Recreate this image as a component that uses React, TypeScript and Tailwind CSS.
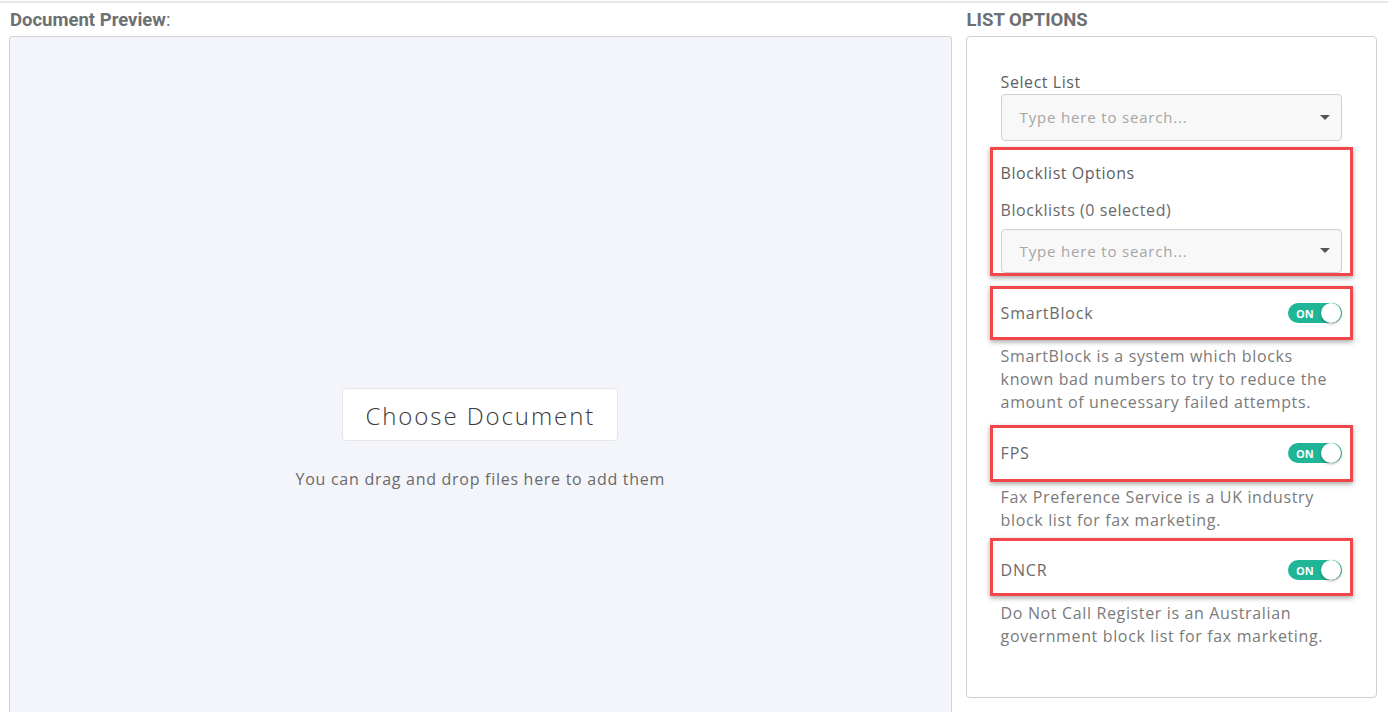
import React from "react";

const body = { fontFamily: '"Open Sans", "Noto Sans", sans-serif' };
const head = { fontFamily: 'Roboto, "Liberation Sans", sans-serif' };

function Caret() {
  return (
    <svg width="10" height="6" viewBox="0 0 10 6" className="shrink-0">
      <path d="M0 0 L10 0 L5 5 Z" fill="#555" />
    </svg>
  );
}

function SearchSelect({ h }: { h: string }) {
  return (
    <div className={`flex items-center justify-between rounded-[4px] border border-[#cfcfcf] bg-[#f8f8f8] pl-[18px] pr-[11px] ${h}`}>
      <span className="text-[15px] tracking-[0.055em] text-[#a5a5a5]">Type here to search...</span>
      <Caret />
    </div>
  );
}

function Toggle() {
  return (
    <div className="relative flex h-[20px] w-[54px] items-center rounded-full bg-[#1fb597] pl-[8px]">
      <span className="text-[11px] font-bold leading-none text-white">ON</span>
      <div className="absolute right-[1px] top-[0px] h-[20px] w-[20px] rounded-full bg-white shadow-[0_1px_3px_rgba(0,0,0,0.35)]" />
    </div>
  );
}

function RedBox({ children, className }: { children: React.ReactNode; className?: string }) {
  return (
    <div className={`-mx-[11px] border-[3px] border-[#f2474a] px-[8px] shadow-[0_2px_5px_rgba(0,0,0,0.35)] ${className ?? ""}`}>
      {children}
    </div>
  );
}

function ToggleRow({ label }: { label: string }) {
  return (
    <div className="flex items-center justify-between">
      <span className="text-[16px] leading-[20px] tracking-[0.05em] text-[#6a6a6a]">{label}</span>
      <Toggle />
    </div>
  );
}

export default function App() {
  return (
    <div className="h-[712px] w-[1388px] overflow-hidden bg-white" style={body}>
      <div className="mt-px h-[2px] bg-[#e8e8e8]" />
      <div className="flex gap-[14px] pl-[9px] pr-[11px]">
        <div className="flex w-[944px] flex-col">
          <div className="pl-[1px] pt-[7px] pb-[5px] text-[18.5px] font-bold leading-[21px] text-[#6d7072]" style={head}>
            Document Preview<span className="font-normal">:</span>
          </div>
          <div className="flex h-[700px] flex-col items-center rounded-[3px] border border-[#d3d3d3] bg-[#f4f5fa] pt-[351px]">
            <div className="flex h-[53px] w-[276px] items-center justify-center rounded-[4px] border border-[#e6e6e6] bg-white pt-[3px] text-[24px] font-light tracking-[0.08em] text-[#3a3a3a]">
              Choose Document
            </div>
            <div className="mt-[26px] text-[16px] tracking-[0.045em] text-[#6a6a6a]">You can drag and drop files here to add them</div>
          </div>
        </div>
        <div className="flex w-[412px] flex-col">
          <div className="pl-[1px] pt-[7px] pb-[5px] text-[18.5px] font-bold leading-[21px] text-[#6d7072]" style={head}>
            LIST OPTIONS
          </div>
          <div className="h-[662px] rounded-[4px] border border-[#d0d0d0] px-[34px] pt-[34px]">
            <div className="text-[16px] leading-[22px] tracking-[0.035em] text-[#5f5f5f]">Select List</div>
            <div className="mt-[1px]">
              <SearchSelect h="h-[47px]" />
            </div>
            <RedBox className="mt-[6px] pb-0 pt-[12px]">
              <div className="text-[16px] font-medium leading-[22px] tracking-[0.035em] text-[#5f5f5f]">Blocklist Options</div>
              <div className="mt-[15px] text-[16px] leading-[22px] tracking-[0.035em] text-[#6a6a6a]">Blocklists (0 selected)</div>
              <div className="mt-[8px]">
                <SearchSelect h="h-[44px]" />
              </div>
            </RedBox>
            <RedBox className="mt-[10px] pb-[14px] pt-[14px]">
              <ToggleRow label="SmartBlock" />
            </RedBox>
            <div className="mt-[5px] text-[16px] leading-[23px] tracking-[0.04em] text-[#7a7a7a]">
              SmartBlock is a system which blocks known bad numbers to try to reduce the amount of unecessary failed attempts.
            </div>
            <RedBox className="mt-[11px] pb-[16px] pt-[15px]">
              <ToggleRow label="FPS" />
            </RedBox>
            <div className="mt-[4px] text-[16px] leading-[23px] tracking-[0.04em] text-[#7a7a7a]">
              Fax Preference Service is a UK industry block list for fax marketing.
            </div>
            <RedBox className="mt-[6px] pb-[13px] pt-[19px]">
              <ToggleRow label="DNCR" />
            </RedBox>
            <div className="mt-[6px] text-[16px] leading-[23px] tracking-[0.04em] text-[#7a7a7a]">
              Do Not Call Register is an Australian government block list for fax marketing.
            </div>
          </div>
        </div>
      </div>
    </div>
  );
}
